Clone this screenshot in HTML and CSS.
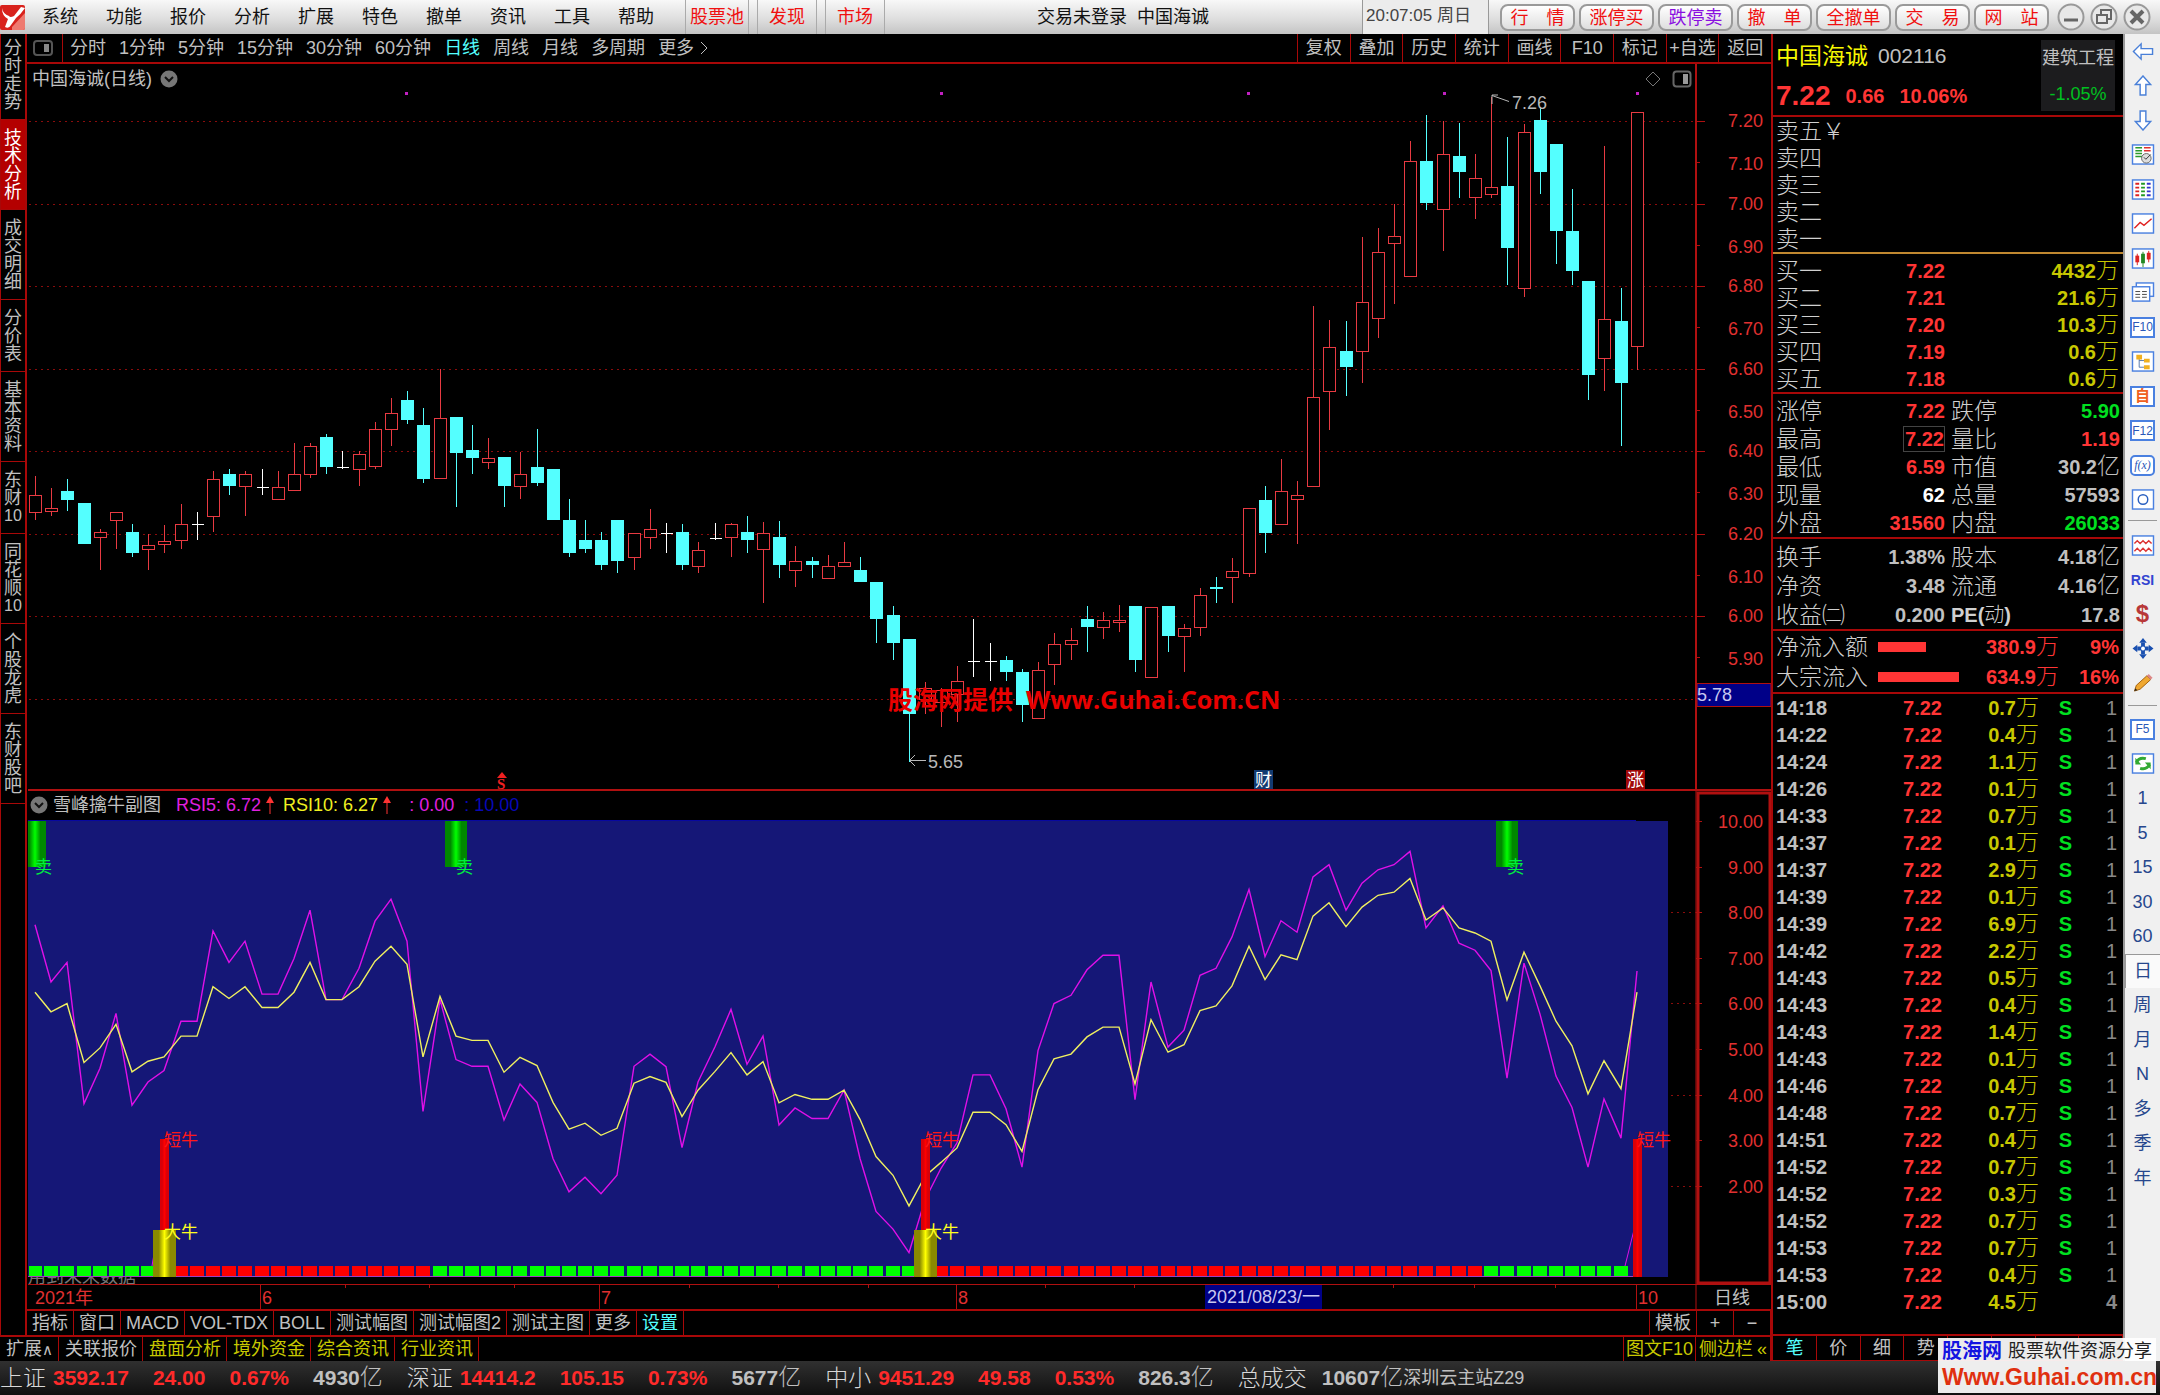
FILE: index.html
```html
<!DOCTYPE html>
<html lang="zh-CN">
<head>
<meta charset="utf-8">
<title>中国海诚 002116</title>
<link rel="stylesheet" href="styles.css">
</head>
<body>
<header class="titlebar">
  <svg class="logo" viewBox="0 0 26 28"><rect y="2" width="25" height="25" rx="2" fill="#d8221c"/><path d="M2 5q1 6 7 8 1 2 5 0L21 4l4 1q-4 6-9 10l-5 7q-2 4-6 2l3-8Q2 13 2 5z" fill="#fff"/><path d="M12 24L25 10v15q0 2-2 2H12z" fill="#ee7a70"/></svg>
  <nav class="menu">
    <button>系统</button><button>功能</button><button>报价</button><button>分析</button><button>扩展</button><button>特色</button><button>撤单</button><button>资讯</button><button>工具</button><button>帮助</button>
  </nav>
  <nav class="hot"><button>股票池</button><button>发现</button><button>市场</button></nav>
  <div class="title">交易未登录&nbsp; 中国海诚</div>
  <div class="clock">20:07:05 周日</div>
  <div class="pills">
    <button>行&emsp;情</button><button>涨停买</button><button class="violet">跌停卖</button><button>撤&emsp;单</button><button>全撤单</button><button>交&emsp;易</button><button>网&emsp;站</button>
  </div>
  <div class="winbtns">
    <button aria-label="最小化"><svg viewBox="0 0 28 28"><circle cx="14" cy="14" r="12.5"/><path d="M7 17h14" stroke-width="3"/></svg></button>
    <button aria-label="还原"><svg viewBox="0 0 28 28"><circle cx="14" cy="14" r="12.5"/><path d="M11 11V7h10v9h-4M7 12h10v8H7z" stroke-width="2"/></svg></button>
    <button aria-label="关闭"><svg viewBox="0 0 28 28"><circle cx="14" cy="14" r="12.5"/><path d="M8 8l12 12M20 8L8 20" stroke-width="4"/></svg></button>
  </div>
</header>

<div class="body">
  <div class="left">
    <div class="workspace">
      <nav class="side">
        <button>分时走势</button><button class="on">技术分析</button><button>成交明细</button><button>分价表</button><button>基本资料</button><button>东财<span>10</span></button><button>同花顺<span>10</span></button><button>个股龙虎</button><button>东财股吧</button>
      </nav>
      <main class="center">
        <div class="periodbar">
          <div class="panel-ico"><svg viewBox="0 0 20 16"><rect x="1" y="1" width="18" height="14" rx="3" fill="none" stroke="#555" stroke-width="2"/><rect x="11" y="4" width="5" height="8" fill="#888"/></svg></div>
          <nav class="periods"><button>分时</button><button>1分钟</button><button>5分钟</button><button>15分钟</button><button>30分钟</button><button>60分钟</button><button class="on">日线</button><button>周线</button><button>月线</button><button>多周期</button><button>更多<svg viewBox="0 0 8 14"><path d="M1 1l6 6-6 6"/></svg></button></nav>
          <nav class="actions"><button>复权</button><button>叠加</button><button>历史</button><button>统计</button><button>画线</button><button>F10</button><button>标记</button><button>+自选</button><button>返回</button></nav>
        </div>
        <section class="pane">
          <svg id="kline" viewBox="27 64 1744 727"></svg>
          <div class="legend">
            <span>中国海诚(日线)</span>
            <svg class="chev" viewBox="0 0 18 18"><circle cx="9" cy="9" r="8.5" fill="#777"/><path d="M5 7l4 4 4-4" fill="none" stroke="#111" stroke-width="2"/></svg>
          </div>
          <div class="watermark">股海网提供&nbsp; Www.Guhai.Com.CN</div>
        </section>
        <section class="pane sub">
          <svg id="rsi" viewBox="27 791 1744 494"></svg>
          <div class="legend">
            <svg class="chev" viewBox="0 0 18 18"><circle cx="9" cy="9" r="8.5" fill="#777"/><path d="M5 7l4 4 4-4" fill="none" stroke="#111" stroke-width="2"/></svg>
            <span class="ind">雪峰擒牛副图</span>
            <span class="mag">RSI5: 6.72</span><svg class="up" viewBox="0 0 8 18"><path d="M4 18V6" stroke="#f33"/><path d="M4 0l4 7H0z" fill="#f33"/></svg>
            <span class="yel">RSI10: 6.27</span><svg class="up" viewBox="0 0 8 18"><path d="M4 18V6" stroke="#f33"/><path d="M4 0l4 7H0z" fill="#f33"/></svg>
            <span class="mag zero">: 0.00</span><span class="blu">: 10.00</span>
          </div>
        </section>
        <svg id="dates" viewBox="27 1285 1744 24"></svg>
        <nav class="tabs"><button>指标</button><button>窗口</button><button>MACD</button><button>VOL-TDX</button><button>BOLL</button><button>测试幅图</button><button>测试幅图2</button><button>测试主图</button><button>更多</button><button class="on">设置</button><span class="fill"></span><button>模板</button><button class="sq">+</button><button class="sq">−</button></nav>
      </main>
    </div>
    <nav class="tabs links"><button>扩展<span class="caret">∧</span></button><button>关联报价</button><button class="gold">盘面分析</button><button class="gold">境外资金</button><button class="gold">综合资讯</button><button class="gold">行业资讯</button><span class="fill"></span><button class="gold f10">图文F10</button><button class="gold edge">侧边栏<span>«</span></button></nav>
  </div>

  <aside class="quote">
    <div class="qhead">
      <div>
        <div class="qname"><b>中国海诚</b><span>002116</span></div>
        <div class="qprice"><b>7.22</b><span>0.66</span><span>10.06%</span></div>
      </div>
      <div class="sector"><span>建筑工程</span><em>-1.05%</em></div>
    </div>
    <table class="book sell">
      <tr><th>卖五￥</th></tr><tr><th>卖四</th></tr><tr><th>卖三</th></tr><tr><th>卖二</th></tr><tr><th>卖一</th></tr>
    </table>
    <table class="book buy">
      <tr><th>买一</th><td class="r">7.22</td><td class="y">4432<i>万</i></td></tr>
      <tr><th>买二</th><td class="r">7.21</td><td class="y">21.6<i>万</i></td></tr>
      <tr><th>买三</th><td class="r">7.20</td><td class="y">10.3<i>万</i></td></tr>
      <tr><th>买四</th><td class="r">7.19</td><td class="y">0.6<i>万</i></td></tr>
      <tr><th>买五</th><td class="r">7.18</td><td class="y">0.6<i>万</i></td></tr>
    </table>
    <table class="info">
      <tr><th>涨停</th><td class="r">7.22</td><th>跌停</th><td class="g">5.90</td></tr>
      <tr><th>最高</th><td class="r"><span class="boxed">7.22</span></td><th>量比</th><td class="r">1.19</td></tr>
      <tr><th>最低</th><td class="r">6.59</td><th>市值</th><td>30.2<i>亿</i></td></tr>
      <tr><th>现量</th><td class="w">62</td><th>总量</th><td>57593</td></tr>
      <tr><th>外盘</th><td class="r">31560</td><th>内盘</th><td class="g">26033</td></tr>
    </table>
    <table class="info basics">
      <tr><th>换手</th><td>1.38%</td><th>股本</th><td>4.18<i>亿</i></td></tr>
      <tr><th>净资</th><td>3.48</td><th>流通</th><td>4.16<i>亿</i></td></tr>
      <tr><th>收益㈡</th><td>0.200</td><th><b>PE(</b><small>动</small><b>)</b></th><td>17.8</td></tr>
    </table>
    <table class="flow">
      <tr><th>净流入额</th><td class="bar"><span style="width:48px"></span></td><td>380.9<i>万</i></td><td>9%</td></tr>
      <tr><th>大宗流入</th><td class="bar"><span style="width:81px"></span></td><td>634.9<i>万</i></td><td>16%</td></tr>
    </table>
    <table class="ticks"><tbody id="ticks"></tbody></table>
    <nav class="qtabs"><button class="on">笔</button><button>价</button><button>细</button><button>势</button><button aria-label="联动"></button><button aria-label="数值"></button><button aria-label="主力"></button><button aria-label="筹码"></button></nav>
  </aside>

  <nav class="tools">
    <div class="tg">
      <button aria-label="后退"><svg viewBox="0 0 24 22"><path d="M2 11l8-8v5h12v6H10v5z" fill="#fff" stroke="#4a80d8" stroke-width="1.5"/></svg></button>
      <button aria-label="上移"><svg viewBox="0 0 24 22"><path d="M12 1l8 9h-5v11H9V10H4z" fill="#fff" stroke="#4a80d8" stroke-width="1.5"/></svg></button>
      <button aria-label="下移"><svg viewBox="0 0 24 22"><path d="M12 21l8-9h-5V1H9v11H4z" fill="#fff" stroke="#4a80d8" stroke-width="1.5"/></svg></button>
      <button aria-label="报价"><svg viewBox="0 0 24 22"><rect class="fr" x="1" y="1" width="22" height="20"/><path d="M4 4h7M4 7h7M4 10h7M4 13h7" stroke="#2a9a2a" stroke-width="1.6"/><path d="M13 4h7M13 7h7" stroke="#e03030" stroke-width="1.6"/><circle cx="15.500" cy="15" r="5" fill="#ddd" stroke="#666"/><path d="M13 14l2 2 5-5" fill="none" stroke="#333"/></svg></button>
      <button aria-label="列表"><svg viewBox="0 0 24 22"><rect class="fr" x="1" y="1" width="22" height="20"/><g stroke-width="2"><path d="M4 5h4M4 9h4M4 13h4M4 17h4" stroke="#d22"/><path d="M10 5h4M10 9h4M10 13h4M10 17h4" stroke="#292"/><path d="M16 5h4M16 9h4M16 13h4M16 17h4" stroke="#33c"/></g></svg></button>
      <button aria-label="走势"><svg viewBox="0 0 24 22"><rect class="fr" x="1" y="1" width="22" height="20"/><path d="M3 16l6-6 4 3 8-7" fill="none" stroke="#e02020" stroke-width="1.5"/></svg></button>
      <button aria-label="K线"><svg viewBox="0 0 24 22"><rect class="fr" x="1" y="1" width="22" height="20"/><path d="M6 6v12M18 3v12" stroke="#d22"/><path d="M12 4v16" stroke="#282"/><rect x="4" y="8" width="4" height="7" fill="#d22"/><rect x="10" y="6" width="4" height="10" fill="#282"/><rect x="16" y="5" width="4" height="7" fill="#d22"/></svg></button>
      <button aria-label="多窗"><svg viewBox="0 0 24 22"><rect class="fr" x="5" y="1" width="18" height="14"/><rect class="fr" x="1" y="5" width="18" height="15"/><path d="M4 10h5M11 10h5M4 13h5M11 13h5M4 16h5M11 16h5" stroke="#444"/></svg></button>
      <button class="fk">F10</button>
      <button aria-label="树形"><svg viewBox="0 0 24 22"><rect class="fr" x="1" y="1" width="22" height="20"/><path d="M8 7v10h5M8 10h5" fill="none" stroke="#57a"/><path d="M5 4h6v5H5zM13 8h6v4h-6zM13 15h6v4h-6z" fill="#f0b020"/></svg></button>
      <button class="fk own">自</button>
      <button class="fk">F12</button>
      <button class="fk fx">f(x)</button>
      <button aria-label="圆"><svg viewBox="0 0 24 22"><rect class="fr" x="1" y="1" width="22" height="20"/><circle cx="12" cy="11" r="5" fill="none" stroke="#2a60c0" stroke-width="1.5"/></svg></button>
    </div>
    <div class="tg five">
      <button aria-label="波形"><svg viewBox="0 0 24 22"><rect class="fr" x="1" y="1" width="22" height="20"/><path d="M3 9l3-3 3 3 3-3 3 3 3-3 3 3M3 17l3-3 3 3 3-3 3 3 3-3 3 3" fill="none" stroke="#d33" stroke-width="1.5"/></svg></button>
      <button class="rsi">RSI</button>
      <button class="dollar">$</button>
      <button aria-label="移动"><svg viewBox="0 0 24 22"><path d="M12 0l4 5H8zM12 22l4-5H8zM1 11l5-4v8zM23 11l-5-4v8z" fill="#1a50b0"/><path d="M12 5v12M6 11h12" stroke="#1a50b0" stroke-width="4"/><circle cx="12" cy="11" r="2" fill="#fff"/></svg></button>
      <button aria-label="画笔"><svg viewBox="0 0 24 22"><path d="M3 20l2-6L16 4l4 4L9 18z" fill="#f0a830" stroke="#a06010"/><path d="M16 4l2-2 4 4-2 2z" fill="#d88"/><path d="M3 20l1-3 2 2z" fill="#222"/></svg></button>
    </div>
    <div class="tg">
      <button class="fk">F5</button>
      <button aria-label="刷新"><svg viewBox="0 0 24 22"><rect class="fr" x="1" y="1" width="22" height="20"/><path d="M5 10q3-6 10-4M19 12q-3 6-10 4" fill="none" stroke="#3a3" stroke-width="3"/><path d="M4 5v7h6zM20 17v-7h-6z" fill="#3a3"/></svg></button>
      <button>1</button><button>5</button><button>15</button><button>30</button><button>60</button><button class="on">日</button><button>周</button><button>月</button><button>N</button><button>多</button><button>季</button><button>年</button>
    </div>
  </nav>
</div>

<footer class="status">
  <span>上证</span><b>3592.17</b><b>24.00</b><b>0.67%</b><strong>4930<i>亿</i></strong>
  <span>深证</span><b>14414.2</b><b>105.15</b><b>0.73%</b><strong>5677<i>亿</i></strong>
  <span>中小</span><b>9451.29</b><b>49.58</b><b>0.53%</b><strong>826.3<i>亿</i></strong>
  <span>总成交</span><strong class="sum">10607<i>亿</i></strong><small>深圳云主站Z29</small>
</footer>
<div class="brand">
  <div><b>股海网</b><span>股票软件资源分享</span></div>
  <strong>Www.Guhai.com.cn</strong>
</div>
<script src="app.js"></script>
</body>
</html>
```
FILE: styles.css
```css
* { box-sizing: border-box; }
:root {
  --line: #a80808;
  --red: #ff3535;
  --gray: #c0c0c0;
  --cyan: #54ffff;
}
body {
  margin: 0;
  background: #000;
  color: var(--gray);
  font: 400 18px/24px "Liberation Sans", "Noto Sans CJK SC", sans-serif;
}
button {
  margin: 0;
  padding: 0;
  border: 0;
  background: none;
  color: inherit;
  font: inherit;
  white-space: nowrap;
}
svg { display: block; }
b, strong { font-weight: 700; }
i { font-style: normal; font-weight: 300; }

/* title bar */
.titlebar {
  display: flex;
  align-items: center;
  height: 34px;
  background: linear-gradient(#f8f8f8, #dcdcdc 60%, #c4c4c4);
  color: #111;
}
.logo { width: 26px; height: 28px; }
.menu { display: flex; gap: 28px; margin-left: 16px; }
.hot { display: flex; align-self: stretch; gap: 8px; margin-left: 31px; }
.hot button {
  padding: 0 4px;
  border: 1px solid #aaa;
  border-width: 0 1px;
  color: #f01010;
}
.hot button:not(:first-child) { padding: 0 11px; }
.title { flex: 1; padding-left: 152px; white-space: nowrap; }
.clock {
  align-self: stretch;
  width: 127px;
  padding: 4px 3px;
  border: 1px solid #999;
  border-width: 0 1px;
  background: #ececec;
  color: #444;
  font-size: 17px;
  white-space: nowrap;
}
.pills { display: flex; gap: 4px; margin-left: 11px; }
.pills button {
  width: 75px;
  height: 27px;
  border: 2px solid #9a9a9a;
  border-radius: 8px;
  background: linear-gradient(#fff, #dedede);
  color: #f01010;
}
.pills .violet { color: #8a10e0; }
.winbtns { display: flex; gap: 5px; padding: 0 9px 0 8px; }
.winbtns svg { width: 28px; height: 28px; fill: #e8e8e8; stroke: #666; }
.winbtns circle { stroke: #999; stroke-width: 2; }
.winbtns path { fill: none; }

/* work area */
.body { display: flex; }
.left { flex: 1; min-width: 0; }
.workspace { display: flex; }
.side {
  display: flex;
  flex-direction: column;
  width: 27px;
  border-right: 2px solid var(--line);
  border-left: 1px solid var(--line);
}
.side button {
  padding: 9px 3px 8px;
  border-bottom: 1px solid var(--line);
  font-size: 18px;
  line-height: 18px;
  white-space: normal;
}
.side button:first-child { padding-top: 5px; }
.side span { display: block; font-size: 16px; white-space: nowrap; }
.side .on { background: #b40000; color: #fff; }
.center { flex: 1; min-width: 0; }

.periodbar {
  display: flex;
  align-items: center;
  height: 30px;
  border-bottom: 2px solid var(--line);
}
.panel-ico {
  display: flex;
  align-items: center;
  height: 28px;
  padding: 0 9px 0 6px;
  border-right: 1px solid var(--line);
}
.panel-ico svg { width: 20px; height: 16px; }
.periods { display: flex; flex: 1; gap: 13px; padding-left: 7px; }
.periods button { display: flex; align-items: center; gap: 6px; }
.periods svg { width: 8px; height: 14px; fill: none; stroke: var(--gray); }
.on { color: var(--cyan); }
.actions { display: grid; grid-template-columns: repeat(9, 1fr); width: 474px; }
.actions button { height: 28px; border-left: 1px solid var(--line); }

.pane { position: relative; }
.pane > svg, #dates { width: 100%; height: auto; }
.legend {
  position: absolute;
  top: 3px;
  left: 5px;
  display: flex;
  align-items: center;
  gap: 8px;
  white-space: nowrap;
}
.sub .legend { top: 2px; left: 3px; gap: 5px; }
.chev { width: 18px; height: 18px; }
.up { width: 8px; height: 18px; }
.ind { margin-right: 10px; }
.mag { color: #e020e0; }
.yel { margin-left: 4px; color: #f0f020; }
.zero { margin-left: 13px; }
.blu { margin-left: 5px; color: #0808b8; }
.watermark {
  position: absolute;
  top: 617px;
  left: 861px;
  color: #e80000;
  font: 700 25px/36px "Open Sans", "Noto Sans CJK SC", sans-serif;
  white-space: nowrap;
}

.tabs {
  display: flex;
  height: 26px;
  border-top: 2px solid var(--line);
}
.tabs button { padding: 0 5px; border-right: 1px solid var(--line); }
.tabs .fill { flex: 1; border-right: 1px solid var(--line); }
.tabs .sq { width: 37px; }
.links button { padding: 0 5px 0 6px; }
.caret { font-family: "DejaVu Sans", sans-serif; font-size: 15px; }
.links .f10 { padding: 0 2px; }
.links .edge { display: flex; gap: 4px; width: 75px; padding: 0 3px; }
.gold { color: #c8c800; }

/* quote panel */
.quote {
  display: flex;
  flex-direction: column;
  width: 352px;
  border-left: 2px solid var(--line);
}
.qhead {
  display: flex;
  justify-content: space-between;
  height: 83px;
  padding: 6px 8px 4px 3px;
  border-bottom: 2px solid var(--line);
}
.qname { display: flex; gap: 10px; align-items: center; height: 32px; font-size: 21px; }
.qname b { color: #f8f800; font-size: 23px; font-weight: 400; }
.qprice { display: flex; align-items: center; gap: 15px; height: 48px; color: var(--red); font-size: 20px; font-weight: 700; }
.qprice b { font-size: 28px; }
.sector {
  display: flex;
  flex-direction: column;
  gap: 12px;
  width: 74px;
  padding: 6px 1px;
  background: #1c1c1e;
  text-align: center;
  white-space: nowrap;
}
.sector em { color: #00c020; font-style: normal; font-size: 18px; }

table { border-collapse: separate; border-spacing: 0; table-layout: fixed; }
th, td { padding: 0; text-align: right; white-space: nowrap; line-height: 26px; }
th { color: #d0d0d0; text-align: left; font-size: 23px; font-weight: 300; }
td { font-size: 20px; font-weight: 700; }
td i { font-size: 23px; line-height: 20px; }
.quote table { width: 100%; padding: 0 4px 0 3px; }
.r { color: var(--red); }
.g { color: #00e020; }
.y { color: #c8c800; }
.w { color: #fff; }
.book tr { height: 27px; }
.sell, .buy, .info, .flow { border-bottom: 2px solid var(--line); }
.sell { border-bottom-color: #c08830; }
.quote .buy, .quote .info { padding-top: 3px; }
.buy th { width: 80px; }
.buy td:nth-child(2) { width: 89px; }
.info tr { height: 28px; }
.basics tr { height: 29px; }
.info th { width: 72px; }
.info td { width: 97px; }
.info th:nth-child(3) { width: 78px; padding-left: 6px; }
.info b { font-size: 20px; }
.info small { font-size: 20px; }
.boxed { border: 1px solid #444; padding: 1px 0 1px 1px; }
.quote .flow { padding-top: 1px; }
.flow tr { height: 30px; }
.flow th { width: 102px; }
.flow .bar { width: 91px; }
.flow td { color: var(--red); }
.flow td:nth-child(3) { width: 90px; }
.bar span { display: block; height: 10px; background: var(--red); }
.ticks tr { height: 27px; }
.ticks td:nth-child(1) { width: 80px; text-align: left; }
.ticks td:nth-child(2) { width: 86px; }
.ticks td:nth-child(3) { width: 97px; }
.ticks td:nth-child(4) { width: 33px; color: #00e020; }
.ticks td:nth-child(5) { padding-right: 2px; color: #888; font-weight: 400; }
.ticks .last td:nth-child(5) { font-weight: 700; }
.qtabs {
  display: grid;
  grid-template-columns: repeat(8, 1fr);
  height: 27px;
  margin-top: auto;
  border: 1px solid var(--line);
  border-width: 2px 0 1px;
}
.qtabs button { border-right: 1px solid var(--line); }

/* right tool strip */
.tools {
  width: 37px;
  border-left: 2px solid #999;
  background: #f0f0f0;
  color: #26478d;
}
.tg { display: grid; grid-auto-rows: 1fr; height: 483px; }
.five {
  height: 186px;
  margin: 3px 3px 6px;
  padding: 7px 0 5px;
  border: 1px solid #999;
  border-width: 1px 0;
}
.tg button { display: flex; align-items: center; justify-content: center; }
.tg svg { width: 24px; height: 21px; }
.fr { fill: #fff; stroke: #4a80e0; stroke-width: 1.5; }
.tg .fk {
  place-self: center;
  width: 25px;
  height: 21px;
  border: 2px solid #4a80e0;
  background: #fff;
  color: #2a58b8;
  font-size: 12px;
}
.tg .own { color: #f06020; font-size: 15px; font-weight: 700; }
.tg .fx { border-radius: 5px; font-family: "Liberation Serif", serif; font-style: italic; }
.tg .rsi { color: #3344d0; font-size: 14px; font-weight: 700; }
.tg .dollar { color: #b83838; font-size: 24px; font-weight: 700; }
.tg .on { border: 1px solid #999; border-width: 1px 0 0 1px; background: #fafafa; color: #26478d; }

/* status bar */
.status {
  display: flex;
  align-items: center;
  height: 34px;
  padding-bottom: 1px;
  background: linear-gradient(#303030, #101010);
  font-size: 21px;
  white-space: nowrap;
}
.status span { width: 53px; font-size: 23px; font-weight: 300; color: #d8d8d8; }
.status b { margin-right: 24px; color: #ff2a2a; }
.status strong { margin-right: 24px; }
.status i { font-size: 23px; }
.status span:last-of-type { width: 84px; }
.status .sum { margin-right: 0; }
.status small { font-size: 18px; }

.brand {
  position: absolute;
  right: 4px;
  top: 1338px;
  width: 218px;
  height: 55px;
  padding: 0 4px;
  background: rgba(255, 255, 255, .92);
  color: #222;
  white-space: nowrap;
}
.brand div { display: flex; gap: 6px; align-items: center; height: 26px; }
.brand b { color: #1414e0; font-size: 20px; }
.brand span { font-size: 18px; }
.brand strong { display: block; color: #e03010; font-size: 23px; line-height: 26px; }

/* chart drawing */
.axis { stroke: #b01010; fill: none; }
.dots { stroke: #8a0c0c; stroke-dasharray: 2 4; }
.lbl { fill: #e03030; font-size: 18px; }
.up-c { stroke: #e83a42; fill: #000; }
.down-c { stroke: #54ffff; fill: #54ffff; }
.flat-c { stroke: #fff; fill: #fff; }
.note { fill: #b8b8b8; font-size: 18px; }
.note-l { stroke: #b8b8b8; fill: none; }
```
FILE: app.js
```js
const X0 = 35, STEP = 16.18;
const cx = i => Math.round(X0 + i * STEP);

// high, body top, body bottom, low, kind (r rising, c falling, w flat)
const candles = `476,495,513,520,r 488,508,512,516,r 479,491,500,511,c 503,503,544,544,c 529,532,538,570,r
512,512,521,549,r 524,532,553,557,c 534,545,550,570,r 525,541,545,553,r 504,524,541,549,r
512,524,524,540,w 471,479,517,532,r 469,474,486,495,c 471,474,487,516,r 469,487,487,495,w
471,487,500,500,r 443,474,491,491,r 443,446,475,478,r 434,437,467,474,c 451,467,467,469,w
451,454,470,486,r 422,429,467,469,r 398,413,430,446,r 391,400,420,424,c 408,425,479,483,c
369,418,479,479,r 417,417,453,507,c 425,450,458,474,c 438,458,463,469,r 457,457,486,507,c
452,474,487,499,r 429,467,483,486,c 469,469,520,520,c 499,520,553,557,c 520,540,549,553,c
532,540,565,570,c 520,520,561,573,c 533,533,558,570,r 509,529,538,549,r 523,533,533,553,w
524,532,565,570,c 542,550,567,573,r 523,538,538,540,w 523,524,538,557,r 516,532,540,553,c
522,533,550,603,r 521,537,565,578,c 546,561,571,587,r 557,561,565,578,c 555,566,579,579,r
542,562,567,567,r 557,570,582,582,c 582,582,619,643,c 606,615,643,660,c 639,639,714,762,c
682,688,700,714,r 688,690,703,727,r 666,681,695,722,r 619,661,661,677,w 643,661,661,681,w
656,660,672,681,c 669,672,705,722,c 662,670,719,719,r 633,644,665,685,r 628,640,645,660,r
606,619,627,652,c 612,620,628,639,r 605,620,623,632,r 606,606,660,672,c 607,607,678,678,r
606,606,636,652,c 624,628,637,672,r 588,595,628,636,r 577,587,589,603,c 558,571,578,603,r
508,508,574,577,r 486,500,533,553,c 459,491,525,525,r 481,495,500,544,r 306,397,487,487,r
320,347,392,430,r 321,351,367,396,c 237,302,352,383,r 228,252,319,338,r 204,236,244,304,r
141,161,277,277,r 115,161,203,210,c 121,154,210,251,r 123,156,172,198,c 154,178,198,219,r
97,187,195,198,r 137,186,248,285,c 124,132,289,297,r 107,120,172,194,c 144,144,231,264,c
189,231,271,285,c 281,281,375,400,c 146,319,359,391,r 288,321,383,446,c 112,112,347,370,r`
  .split(/\s+/).map(s => s.split(','));

let k = '';
for (let n = 0; n < 8; n++) k += `<path class="dots" d="M29 ${Math.round(121 + n * 82.5)}.5H1694"/>`;
const cls = { r: 'up-c', c: 'down-c', w: 'flat-c' };
candles.forEach(([h, t, b, l, kind], i) => {
  const x = cx(i);
  k += `<g class="${cls[kind]}" shape-rendering="crispEdges"><path d="M${x + .5} ${h}V${t}M${x + .5} ${b}V${l}"/>`;
  k += kind === 'w'
    ? `<path d="M${x - 5} ${+t + .5}h12"/>`
    : `<rect x="${x - 5.5}" y="${+t + .5}" width="12" height="${Math.max(1, b - t - 1)}"/>`;
  k += '</g>';
});
[405, 940, 1247, 1443, 1636].forEach(x => k += `<rect x="${x}" y="92" width="3" height="3" fill="#c020c0"/>`);
k += '<path class="axis" stroke-width="2" d="M1696 64V791M28 790H1771"/>';
for (let n = 0; n < 14; n++) {
  const y = Math.round(121 + n * 41.25);
  k += `<path class="axis" d="M1696 ${y}.5h${n % 2 ? 4 : 9}"/><text class="lbl" x="1728" y="${y + (n % 2 ? 8 : 6)}">${(7.2 - n / 10).toFixed(2)}</text>`;
}
k += `<rect x="1697" y="683.5" width="74" height="23" fill="#000088" stroke="#b01010"/><text x="1697" y="701" font-size="18" fill="#c8c8f0">5.78</text>
<path class="note-l" d="M910 760.500h16M910 760l5-5M910 761l5 5M1492 95.500l17 6M1492 104v-9h6"/>
<text class="note" x="928" y="768">5.65</text><text class="note" x="1512" y="109">7.26</text>
<path d="M1646 79l7-7 7 7-7 7z" fill="none" stroke="#777"/><rect x="1673.500" y="71.500" width="17" height="15" rx="3" fill="none" stroke="#666" stroke-width="2"/><rect x="1683" y="74" width="5" height="10" fill="#999"/>
<rect x="1254" y="770" width="19" height="19" fill="#123a70"/><text x="1255" y="786" font-size="17" fill="#fff">财</text>
<rect x="1626" y="770" width="19" height="19" fill="#a00808"/><text x="1627" y="786" font-size="17" fill="#fff">涨</text>
<path d="M497 778l5-6 5 6z" fill="#f02020"/><text x="497" y="789" font-size="15" font-weight="700" font-family="Liberation Serif" fill="#f02020">S</text>`;
document.getElementById('kline').innerHTML = k;

// indicator samples, measured downwards from the top edge of the sub chart
const rsi5 = [369,515,465,825,735,595,829,770,741,615,615,385,465,411,546,546,455,332,560,560,480,360,304,411,845,560,713,730,730,867,775,822,965,1050,1013,1055,1008,730,699,731,937,770,680,585,725,653,880,836,863,863,791,965,1100,1145,1205,1070,990,925,752,752,838,987,690,570,549,484,447,447,815,515,681,638,498,480,400,279,450,359,388,247,216,332,263,229,216,182,377,321,416,434,486,760,467,597,755,835,987,813,913,487];
const rsi10 = [541,591,570,720,683,623,744,717,706,653,653,527,557,527,580,580,541,465,560,560,527,462,424,470,706,552,653,664,664,745,707,728,822,890,875,906,888,773,756,771,858,791,743,695,752,718,823,802,814,814,791,865,960,1008,1086,1010,975,938,847,847,879,947,790,711,699,655,630,630,775,611,694,675,588,576,525,424,509,446,458,347,313,374,324,294,286,251,357,326,377,390,411,561,439,525,615,678,800,716,787,541];
const line = (a, c) => `<polyline fill="none" stroke="${c}" stroke-width="1.4" points="${a.map((v, i) => cx(i) + ',' + (780 + v * .3922).toFixed(1)).join(' ')}"/>`;
const grad = (id, a, b) => `<linearGradient id="${id}"><stop offset="0" stop-color="${a}"/><stop offset=".25" stop-color="${a}"/><stop offset=".5" stop-color="${b}"/><stop offset=".75" stop-color="${a}"/><stop offset="1" stop-color="${a}"/></linearGradient>`;
let r = `<defs>${grad('gg', '#008800', '#00ff00')}${grad('gy', '#8a8a00', '#ffff00')}${grad('gr', '#d80008', '#ff0000')}</defs>
<text x="28" y="1283" font-size="18" fill="#777">用到未来数据</text>
<rect x="28" y="821" width="1640" height="456" fill="#151777"/><path d="M28 820.500H1636" stroke="#0808a0"/>`;
r += line(rsi5, '#e010e8') + line(rsi10, '#f0f060');
r += '<path d="M1625 1266l10-40M152 1266l4-24" stroke="#e010e8" fill="none"/><path d="M28 1276.500H1636" stroke="#a040c0"/>';
for (let i = 0; i < 99; i++) {
  if (i === 8 || i === 55) continue;
  const green = i < 8 || (i > 24 && i < 55) || i > 89;
  const x = Math.max(29, cx(i) - 7);
  r += `<rect x="${x}" y="1266" width="${cx(i) + 7 - x}" height="10" fill="${green ? '#00ff00' : '#ff0000'}"/>`;
}
[0, 26, 91].forEach(i => {
  const x = cx(i);
  r += `<svg x="${Math.max(28, x - 11)}" y="821" width="${Math.min(22, x + 11 - 28)}" height="46"><rect x="${Math.min(0, x - 39)}" width="22" height="46" fill="url(#gg)"/></svg><text x="${x}" y="873" font-size="17" fill="#00f040">卖</text>`;
});
[8, 55, 99].forEach(i => {
  const x = cx(i);
  r += `<rect x="${x - 4}" y="1139" width="9" height="138" fill="url(#gr)"/><text x="${x}" y="1146" font-size="17" fill="#ff1818">短牛</text>`;
  if (i < 99) r += `<rect x="${x - 11}" y="1230" width="23" height="47" fill="url(#gy)"/><text x="${x}" y="1238" font-size="17" fill="#ffff20">大牛</text>`;
});
r += '<path class="axis" d="M1696 791v494M28 1284.500H1771"/><rect class="axis" x="1698" y="793" width="72" height="490" stroke-width="3"/>';
for (let v = 10; v > 1; v--) {
  const y = Math.round(1277 - v * 45.6);
  r += `<path class="axis" d="M1696 ${y}.5h6"/><text class="lbl" x="1763" y="${y + 7}" text-anchor="end">${v}.00</text>`;
  if (v % 2 === 0 && v < 10) r += `<path class="dots" d="M1671 ${y}.5h25"/>`;
}
document.getElementById('rsi').innerHTML = r;

let d = '';
[345, 429, 514, 689, 778, 868, 1045, 1134, 1393, 1474, 1555].forEach(x => d += `<path class="axis" d="M${x}.5 1285v3"/>`);
d += '<path class="axis" d="M1696 1285v24"/><text class="lbl" x="35" y="1304">2021年</text>';
[[260, 6], [599, 7], [956, 8], [1636, 10]].forEach(([x, t]) => d += `<path class="axis" d="M${x}.5 1285v24"/><text class="lbl" x="${x + 2}" y="1304">${t}</text>`);
d += '<rect x="1205" y="1285" width="117" height="24" fill="#000088"/><text x="1207" y="1303" font-size="18" fill="#c8c8f0">2021/08/23/一</text><text x="1714" y="1304" font-size="18" fill="#c0c0c0">日线</text>';
document.getElementById('dates').innerHTML = d;

const trades = '14:18 0.7,14:22 0.4,14:24 1.1,14:26 0.1,14:33 0.7,14:37 0.1,14:37 2.9,14:39 0.1,14:39 6.9,14:42 2.2,14:43 0.5,14:43 0.4,14:43 1.4,14:43 0.1,14:46 0.4,14:48 0.7,14:51 0.4,14:52 0.7,14:52 0.3,14:52 0.7,14:53 0.7,14:53 0.4,15:00 4.5';
document.getElementById('ticks').innerHTML = trades.split(',').map(s => {
  const [time, vol] = s.split(' ');
  const end = time === '15:00';
  return `<tr${end ? ' class="last"' : ''}><td>${time}</td><td class="r">7.22</td><td class="y">${vol}<i>万</i></td><td>${end ? '' : 'S'}</td><td>${end ? 4 : 1}</td></tr>`;
}).join('');
```
